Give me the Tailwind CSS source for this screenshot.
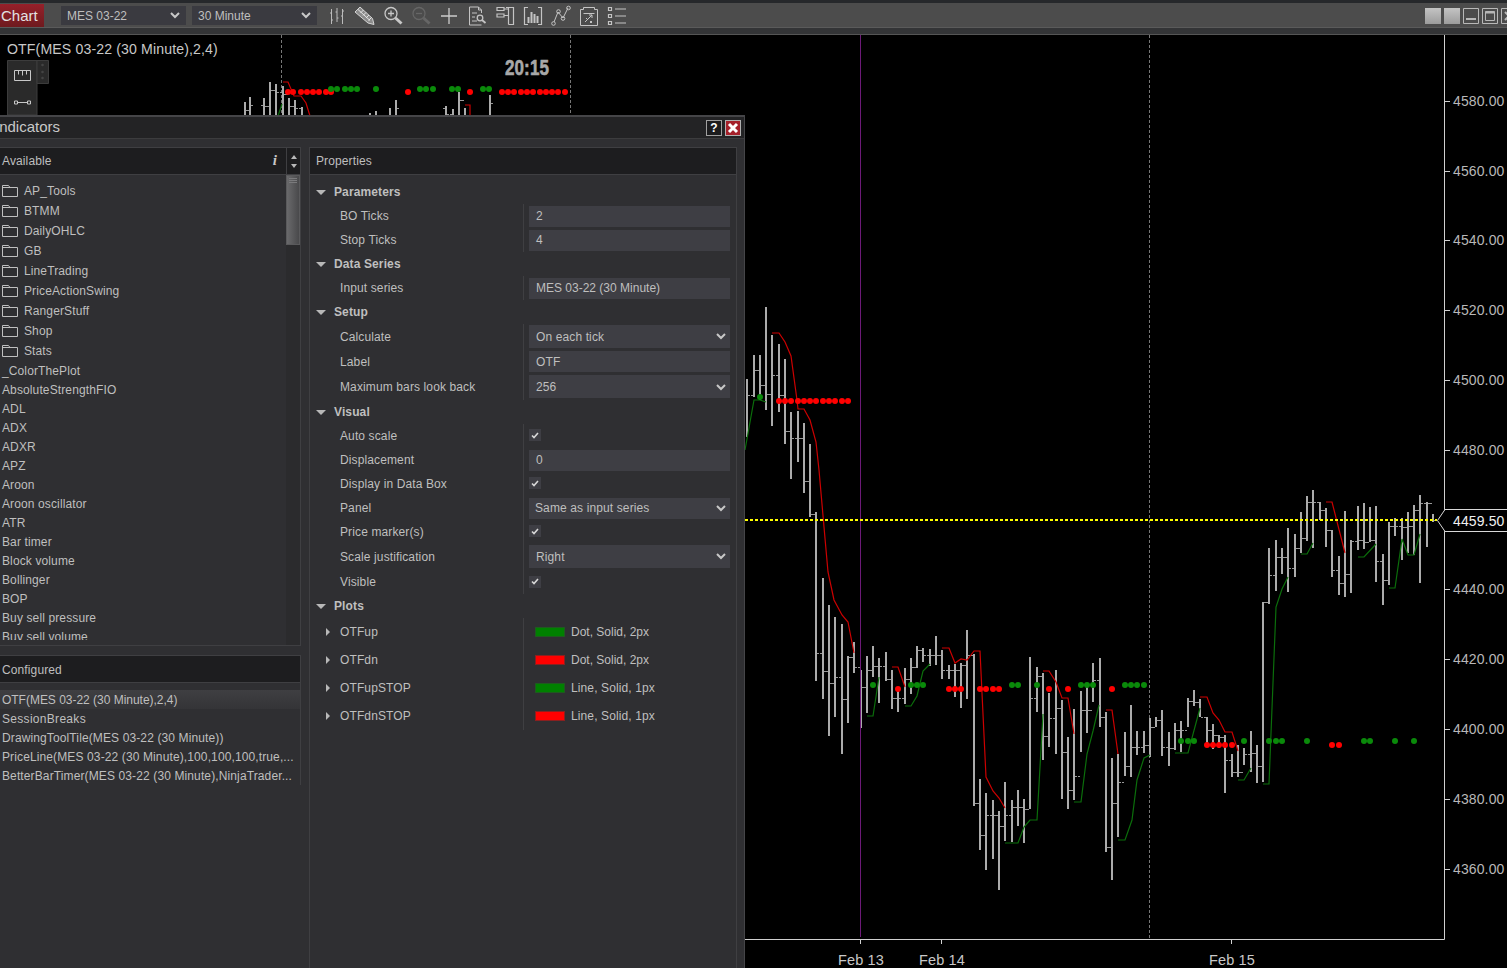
<!DOCTYPE html>
<html lang="en">
<head>
  <meta charset="UTF-8" />
  <title>Chart - Indicators</title>
  <script src="https://cdn.jsdelivr.net/npm/@tailwindcss/browser@4"></script>
</head>
<body class="bg-black font-['Liberation_Sans',Arial,sans-serif] text-xs tracking-[0.12px] text-[#bfbfbf]">
<svg class="hidden">
  <symbol id="folder" viewBox="0 0 16 12"><path d="M.5 11.5V.5h6l1.5 2h7.5v9zM.5 2.5h7.5" fill="none" stroke="#c0c0c0"/></symbol>
  <symbol id="chev" viewBox="0 0 10 7"><path d="M1 1l4 4 4-4" fill="none" stroke="#c8c8c8" stroke-width="2"/></symbol>
  <symbol id="tick" viewBox="0 0 8 7"><path d="M1 3.5l2 2 4-4.5" fill="none" stroke="#d8d8d8" stroke-width="1.6"/></symbol>
</svg>

<div class="relative w-[1507px] h-[968px] overflow-hidden">

  <!-- top toolbar -->
  <div class="h-[35px] bg-[#333436] border-b border-[#555]">
    <div class="h-[3px] bg-[#26282b]"></div>
    <div class="h-[25px] bg-[#4c4c4c] border-b border-[#5a5a5a] flex items-center">
      <div class="w-[44px] h-[23px] mt-[1px] flex items-center pl-[1px] bg-gradient-to-b from-[#96202a] to-[#6e1a1e] text-[15px] tracking-normal text-[#e2e2e2]">Chart</div>
      <div class="ml-[17px] mt-[1px] w-[125px] h-[19px] bg-[#3a3a40] flex items-center justify-between px-[6px] tracking-normal">MES 03-22 <svg class="w-[10px] h-[7px]"><use href="#chev"/></svg></div>
      <div class="ml-[6px] mt-[1px] w-[125px] h-[19px] bg-[#3a3a40] flex items-center justify-between px-[6px] tracking-normal">30 Minute <svg class="w-[10px] h-[7px]"><use href="#chev"/></svg></div>
      <div class="ml-2 mt-[1px] flex gap-1">
        <svg class="w-6 h-6" viewBox="0 0 24 24" fill="none" stroke="#bbb"><path d="M6.500 5v15M5 9h1.500M6.500 16H8M12 4v14M10.500 8H12M12 14h1.500M17.500 5v15M16 12h1.500M17.500 7H19"/></svg>
        <svg class="w-6 h-6" viewBox="0 0 24 24" fill="none" stroke="#d4d4d4"><path d="M7 3L2 8l13 11 6 1.500-1.500-6z" fill="#8c8c8c"/><path d="M5 5.500l12 11M7.500 9l3-3M10 11.500l3-3M13 14l3-3M15.500 16.500l3-3" stroke="#e4e4e4"/></svg>
        <svg class="w-6 h-6" viewBox="0 0 24 24" fill="none" stroke="#c8c8c8" stroke-width="1.300"><circle cx="10" cy="9.500" r="6"/><path d="M10 6.500v6M7 9.500h6"/><path d="M14.500 14l6 5.500" stroke-width="3"/></svg>
        <svg class="w-6 h-6" viewBox="0 0 24 24" fill="none" stroke="#666" stroke-width="1.300"><circle cx="10" cy="9.500" r="6"/><path d="M7 9.500h6"/><path d="M14.500 14l6 5.500" stroke-width="3"/></svg>
        <svg class="w-6 h-6" viewBox="0 0 24 24" fill="none" stroke="#ccc" stroke-width="1.300"><path d="M12 4v16M4 12h16"/></svg>
        <svg class="w-6 h-6" viewBox="0 0 24 24" fill="none" stroke="#c4c4c4"><path d="M16.500 9V6l-3-3h-9v18h12M13.500 3v3h3M7 9h5M7 13h3M7 17h5"/><circle cx="15" cy="14" r="2.800" stroke-width="1.300"/><path d="M17 16l3.500 3" stroke-width="1.800"/></svg>
        <svg class="w-6 h-6" viewBox="0 0 24 24" fill="none" stroke="#c4c4c4" stroke-width="1.200"><path d="M13 3.500h7.500v17h-5M15.500 3.500v17M4 3.500h7v3H4zM4 10h7v3H4zM11 5h4.500M11 11.500h4.500"/></svg>
        <svg class="w-6 h-6" viewBox="0 0 24 24" fill="none" stroke="#c4c4c4" stroke-width="1.200"><path d="M7 3.500H3.500v17H7M17 3.500h3.500v17H17"/><path d="M7.500 19v-6M10.500 19V8M13.500 19v-9M16.500 19v-7" stroke-width="2"/></svg>
        <svg class="w-6 h-6" viewBox="0 0 24 24" fill="none" stroke="#c4c4c4"><path d="M5 18l4-10 5 6 5-10"/><circle cx="4.500" cy="19.500" r="1.800"/><circle cx="9.500" cy="7.500" r="1.800"/><circle cx="14" cy="14.500" r="1.800"/><circle cx="19.500" cy="4" r="1.800"/></svg>
        <svg class="w-6 h-6" viewBox="0 0 24 24" fill="none" stroke="#c4c4c4"><path d="M3.500 5.500h3v-2h11v2h3v16h-17zM6.500 9.500h11M8 18l7-7M12 11h3v3M9 14l2 2M13 17l2 2M15 17l-2 2"/></svg>
        <svg class="w-6 h-6" viewBox="0 0 24 24" fill="none" stroke="#c4c4c4" stroke-width="1.200"><path d="M3.500 3.500h3v3h-3zM3.500 10.500h3v3h-3zM3.500 17.500h3v3h-3zM10 5h11M10 12h11M10 19h11"/></svg>
      </div>
      <div class="ml-auto mt-[1px] flex gap-[3px] -mr-[10px]">
        <div class="w-4 h-4 bg-gradient-to-b from-[#c4c4c4] to-[#9c9c9c]"></div>
        <div class="w-4 h-4 bg-gradient-to-b from-[#c4c4c4] to-[#9c9c9c]"></div>
        <svg class="w-4 h-4" viewBox="0 0 16 16" fill="none" stroke="#b8b8b8"><path d="M.5.500h15v15H.5z"/><path d="M3 11h10" stroke-width="2"/></svg>
        <svg class="w-4 h-4" viewBox="0 0 16 16" fill="none" stroke="#b8b8b8"><path d="M.5.500h15v15H.5zM3.500 3.500h9v9h-9z"/><path d="M3.500 4.500h9" stroke-width="2"/></svg>
        <svg class="w-4 h-4" viewBox="0 0 16 16" fill="none" stroke="#b8b8b8"><path d="M.5.500h15v15H.5z"/><path d="M4 4l8 8M12 4l-8 8" stroke-width="2"/></svg>
      </div>
    </div>
  </div>

  <!-- chart canvas -->
  <svg id="chart" class="absolute left-0 top-0" width="1507" height="968" viewBox="0 0 1507 968" font-family="Liberation Sans, Arial, sans-serif">
    <path d="M281.500 35V115M570.500 35V115M1149.500 35V938" stroke="#777" stroke-dasharray="3 2" fill="none"/>
    <g id="bars" shape-rendering="crispEdges"></g>
    <path d="M860.500 35V937" stroke="#6d1a78" fill="none"/>
    <g id="lines" fill="none"></g>
    <g id="dots"></g>
    <path d="M745 520H1437" stroke="#ffff00" stroke-width="2" stroke-dasharray="3 2" shape-rendering="crispEdges"/>
    <path d="M1444.500 35V939.500H745M860.500 939V944M941.500 939V944M1231.500 939V944" stroke="#d0d0d0" fill="none"/>
    <g id="axis" font-size="14" fill="#b8b8b8"></g>
    <g font-size="14.500" fill="#c8c8c8" text-anchor="middle">
      <text x="861" y="965">Feb 13</text>
      <text x="942" y="965">Feb 14</text>
      <text x="1232" y="965">Feb 15</text>
    </g>
    <path d="M1507 509.500H1445L1437.500 520.500 1445 531.500H1507" fill="#000" stroke="#d8d8d8"/>
    <text x="1453" y="526" font-size="14" fill="#f0f0f0">4459.50</text>
    <text x="7" y="54" font-size="14.130" fill="#c8c8c8">OTF(MES 03-22 (30 Minute),2,4)</text>
    <text x="505" y="74.500" font-size="22" font-weight="700" fill="#a8a8a8" stroke="#a8a8a8" stroke-width=".6" textLength="44" lengthAdjust="spacingAndGlyphs">20:15</text>
    <!-- drawing tools strip -->
    <path d="M7.500 60.500H37V115H7.500z" fill="#2a2a2a" stroke="#3c3c3c"/>
    <path d="M37 60.500H48.500V83.500H37z" fill="#2a2a2a" stroke="#3c3c3c"/>
    <circle cx="42.500" cy="65" r="1.300" fill="#444"/><circle cx="42.500" cy="72" r="1.300" fill="#444"/><circle cx="42.500" cy="78" r="1.300" fill="#444"/>
    <path d="M14.500 70.500h16v10h-16zM18.500 70.500v4M22.500 70.500v5M26.500 70.500v4" fill="none" stroke="#c8c8c8"/>
    <path d="M17 102.500h11" stroke="#c8c8c8"/><path d="M14.500 101h3v3h-3zM27.500 101h3v3h-3z" fill="none" stroke="#c8c8c8"/>
  </svg>

  <!-- indicators dialog -->
  <div class="absolute left-0 top-[115px] w-[745px] h-[853px] bg-[#2f2f32] border-r border-[#454548]">
    <div class="h-6 bg-[#232325] border-t-2 border-[#454548] border-b border-b-[#3c3c3e] flex items-center">
      <span class="-ml-[5px] pb-[2px] text-[15px] tracking-normal text-[#c8c8c8]">Indicators</span>
      <div class="ml-auto mr-[3px] flex gap-[3px]">
        <div class="w-4 h-4 bg-[#1c1c1e] border border-[#a0a0a0] flex items-center justify-center text-xs font-bold text-white">?</div>
        <div class="w-4 h-4 bg-[#a5202a] border border-[#b0b0b0] flex items-center justify-center">
          <svg class="w-3 h-3" viewBox="0 0 12 12"><path d="M2 2l8 8M10 2l-8 8" stroke="#fff" stroke-width="3"/></svg>
        </div>
      </div>
    </div>

    <div class="flex items-start pt-2">
      <!-- left column -->
      <div class="w-[301px] shrink-0">
        <div class="h-[499px] border-r border-b border-[#3f3f42] flex flex-col">
          <div class="h-7 shrink-0 flex bg-[#1d1d1f] border-t border-b border-[#3f3f42]">
            <div class="flex-1 flex items-center justify-between pl-[2px] pr-[9px]">Available <span class="font-['Liberation_Serif',serif] italic font-bold text-[15px] text-[#c8c8c8]">i</span></div>
            <div class="w-[14px] border-l border-[#3f3f42] flex flex-col items-center justify-center gap-[5px]">
              <div class="w-0 h-0 border-x-[3px] border-x-transparent border-b-[4px] border-b-[#b8b8b8]"></div>
              <div class="w-0 h-0 border-x-[3px] border-x-transparent border-t-[4px] border-t-[#b8b8b8]"></div>
            </div>
          </div>
          <div class="flex-1 flex min-h-0">
            <div class="flex-1 h-[465px] overflow-hidden pt-[6px] pl-[2px]">
              <div class="h-5 flex items-center gap-[6px]"><svg class="w-4 h-3"><use href="#folder"/></svg>AP_Tools</div>
              <div class="h-5 flex items-center gap-[6px]"><svg class="w-4 h-3"><use href="#folder"/></svg>BTMM</div>
              <div class="h-5 flex items-center gap-[6px]"><svg class="w-4 h-3"><use href="#folder"/></svg>DailyOHLC</div>
              <div class="h-5 flex items-center gap-[6px]"><svg class="w-4 h-3"><use href="#folder"/></svg>GB</div>
              <div class="h-5 flex items-center gap-[6px]"><svg class="w-4 h-3"><use href="#folder"/></svg>LineTrading</div>
              <div class="h-5 flex items-center gap-[6px]"><svg class="w-4 h-3"><use href="#folder"/></svg>PriceActionSwing</div>
              <div class="h-5 flex items-center gap-[6px]"><svg class="w-4 h-3"><use href="#folder"/></svg>RangerStuff</div>
              <div class="h-5 flex items-center gap-[6px]"><svg class="w-4 h-3"><use href="#folder"/></svg>Shop</div>
              <div class="h-5 flex items-center gap-[6px]"><svg class="w-4 h-3"><use href="#folder"/></svg>Stats</div>
              <div class="h-[19px] leading-[19px] mt-[1px]">_ColorThePlot</div>
              <div class="h-[19px] leading-[19px]">AbsoluteStrengthFIO</div>
              <div class="h-[19px] leading-[19px]">ADL</div>
              <div class="h-[19px] leading-[19px]">ADX</div>
              <div class="h-[19px] leading-[19px]">ADXR</div>
              <div class="h-[19px] leading-[19px]">APZ</div>
              <div class="h-[19px] leading-[19px]">Aroon</div>
              <div class="h-[19px] leading-[19px]">Aroon oscillator</div>
              <div class="h-[19px] leading-[19px]">ATR</div>
              <div class="h-[19px] leading-[19px]">Bar timer</div>
              <div class="h-[19px] leading-[19px]">Block volume</div>
              <div class="h-[19px] leading-[19px]">Bollinger</div>
              <div class="h-[19px] leading-[19px]">BOP</div>
              <div class="h-[19px] leading-[19px]">Buy sell pressure</div>
              <div class="h-[19px] leading-[19px]">Buy sell volume</div>
            </div>
            <div class="w-[14px] bg-[#2b2b2d]">
              <div class="h-[70px] bg-gradient-to-r from-[#6a6a6c] to-[#49494b] border border-[#5a5a5c] pt-[2px] px-[2px] flex flex-col gap-[1px]">
                <div class="h-px bg-[#7a7a7c]"></div>
                <div class="h-px bg-[#7a7a7c]"></div>
                <div class="h-px bg-[#7a7a7c]"></div>
              </div>
            </div>
          </div>
        </div>

        <div class="mt-[9px] border-r border-[#3f3f42]">
          <div class="h-7 flex items-center pl-[2px] pt-[2px] bg-[#1d1d1f] border-t border-b border-[#3f3f42]">Configured</div>
          <div class="pt-[7px]">
            <div class="h-[19px] leading-[21px] pl-[2px] tracking-[-0.02px] bg-gradient-to-b from-[#3f3f42] to-[#343437]">OTF(MES 03-22 (30 Minute),2,4)</div>
            <div class="h-[19px] leading-[21px] pl-[2px] tracking-[0.3px]">SessionBreaks</div>
            <div class="h-[19px] leading-[21px] pl-[2px]">DrawingToolTile(MES 03-22 (30 Minute))</div>
            <div class="h-[19px] leading-[21px] pl-[2px]">PriceLine(MES 03-22 (30 Minute),100,100,100,true,...</div>
            <div class="h-[19px] leading-[21px] pl-[2px]">BetterBarTimer(MES 03-22 (30 Minute),NinjaTrader...</div>
          </div>
        </div>
      </div>

      <!-- properties -->
      <div class="ml-2 w-[428px] h-[821px] border-x border-[#3f3f42]">
        <div class="h-7 flex items-center pl-[6px] bg-[#1d1d1f] border-t border-b border-[#3f3f42]">Properties</div>
        <div class="pt-[5px]">
          <div class="h-6 flex items-center pl-[6px] font-bold"><div class="w-0 h-0 border-x-[5px] border-x-transparent border-t-[5px] border-t-[#b8b8b8] mr-2"></div>Parameters</div>
          <div class="h-6 flex"><div class="w-[213px] pl-[30px] leading-6">BO Ticks</div><div class="flex-1 border-l border-[#3f3f42] pl-[5px] flex items-center"><div class="w-[201px] h-[21px] bg-[#3e3e44] pl-[7px] leading-[21px]">2</div></div></div>
          <div class="h-6 flex"><div class="w-[213px] pl-[30px] leading-6">Stop Ticks</div><div class="flex-1 border-l border-[#3f3f42] pl-[5px] flex items-center"><div class="w-[201px] h-[21px] bg-[#3e3e44] pl-[7px] leading-[21px]">4</div></div></div>

          <div class="h-6 flex items-center pl-[6px] font-bold"><div class="w-0 h-0 border-x-[5px] border-x-transparent border-t-[5px] border-t-[#b8b8b8] mr-2"></div>Data Series</div>
          <div class="h-6 flex"><div class="w-[213px] pl-[30px] leading-6">Input series</div><div class="flex-1 border-l border-[#3f3f42] pl-[5px] flex items-center"><div class="w-[201px] h-[21px] bg-[#3e3e44] pl-[7px] leading-[21px] tracking-normal">MES 03-22 (30 Minute)</div></div></div>

          <div class="h-6 flex items-center pl-[6px] font-bold"><div class="w-0 h-0 border-x-[5px] border-x-transparent border-t-[5px] border-t-[#b8b8b8] mr-2"></div>Setup</div>
          <div class="h-[25px] flex"><div class="w-[213px] pl-[30px] leading-[27px]">Calculate</div><div class="flex-1 border-l border-[#3f3f42] pl-[5px] flex items-center"><div class="w-[201px] h-[23px] bg-[#3e3e44] pl-[7px] pr-[4px] flex items-center justify-between">On each tick <svg class="w-[10px] h-[7px]"><use href="#chev"/></svg></div></div></div>
          <div class="h-[25px] flex"><div class="w-[213px] pl-[30px] leading-[27px]">Label</div><div class="flex-1 border-l border-[#3f3f42] pl-[5px] flex items-center"><div class="w-[201px] h-[21px] bg-[#3e3e44] pl-[7px] leading-[23px]">OTF</div></div></div>
          <div class="h-[26px] flex"><div class="w-[213px] pl-[30px] leading-[26px]">Maximum bars look back</div><div class="flex-1 border-l border-[#3f3f42] pl-[5px] pb-[1px] flex items-center"><div class="w-[201px] h-[23px] bg-[#3e3e44] pl-[7px] pr-[4px] pt-[1px] flex items-center justify-between">256 <svg class="w-[10px] h-[7px]"><use href="#chev"/></svg></div></div></div>

          <div class="h-6 flex items-center pl-[6px] font-bold"><div class="w-0 h-0 border-x-[5px] border-x-transparent border-t-[5px] border-t-[#b8b8b8] mr-2"></div>Visual</div>
          <div class="h-6 flex"><div class="w-[213px] pl-[30px] leading-6">Auto scale</div><div class="flex-1 border-l border-[#3f3f42] pl-[5px] pb-[2px] flex items-center"><div class="w-3 h-3 bg-[#3e3e44] flex items-center justify-center"><svg class="w-2 h-[7px]"><use href="#tick"/></svg></div></div></div>
          <div class="h-6 flex"><div class="w-[213px] pl-[30px] leading-6">Displacement</div><div class="flex-1 border-l border-[#3f3f42] pl-[5px] flex items-center"><div class="w-[201px] h-[21px] bg-[#3e3e44] pl-[7px] leading-[21px]">0</div></div></div>
          <div class="h-6 flex"><div class="w-[213px] pl-[30px] leading-6">Display in Data Box</div><div class="flex-1 border-l border-[#3f3f42] pl-[5px] pb-[2px] flex items-center"><div class="w-3 h-3 bg-[#3e3e44] flex items-center justify-center"><svg class="w-2 h-[7px]"><use href="#tick"/></svg></div></div></div>
          <div class="h-6 flex"><div class="w-[213px] pl-[30px] leading-6">Panel</div><div class="flex-1 border-l border-[#3f3f42] pl-[5px] flex items-center"><div class="w-[201px] h-[21px] bg-[#3e3e44] pl-[6px] pr-[4px] flex items-center justify-between">Same as input series <svg class="w-[10px] h-[7px]"><use href="#chev"/></svg></div></div></div>
          <div class="h-6 flex"><div class="w-[213px] pl-[30px] leading-6">Price marker(s)</div><div class="flex-1 border-l border-[#3f3f42] pl-[5px] pb-[2px] flex items-center"><div class="w-3 h-3 bg-[#3e3e44] flex items-center justify-center"><svg class="w-2 h-[7px]"><use href="#tick"/></svg></div></div></div>
          <div class="h-[25px] flex"><div class="w-[213px] pl-[30px] leading-[27px]">Scale justification</div><div class="flex-1 border-l border-[#3f3f42] pl-[5px] flex items-center"><div class="w-[201px] h-[23px] bg-[#3e3e44] pl-[7px] pr-[4px] flex items-center justify-between">Right <svg class="w-[10px] h-[7px]"><use href="#chev"/></svg></div></div></div>
          <div class="h-[25px] flex"><div class="w-[213px] pl-[30px] leading-[27px]">Visible</div><div class="flex-1 border-l border-[#3f3f42] pl-[5px] flex items-center"><div class="w-3 h-3 bg-[#3e3e44] flex items-center justify-center"><svg class="w-2 h-[7px]"><use href="#tick"/></svg></div></div></div>

          <div class="h-6 flex items-center pl-[6px] font-bold"><div class="w-0 h-0 border-x-[5px] border-x-transparent border-t-[5px] border-t-[#b8b8b8] mr-2"></div>Plots</div>
          <div class="h-7 flex"><div class="w-[213px] pl-[16px] flex items-center"><div class="w-0 h-0 border-y-[4px] border-y-transparent border-l-[4px] border-l-[#b8b8b8] mr-[10px]"></div>OTFup</div><div class="flex-1 border-l border-[#3f3f42] pl-[11px] flex items-center gap-[6px] tracking-normal"><div class="w-[30px] h-[10px] bg-[#008000] border border-[#1f5a1f]"></div>Dot, Solid, 2px</div></div>
          <div class="h-7 flex"><div class="w-[213px] pl-[16px] flex items-center"><div class="w-0 h-0 border-y-[4px] border-y-transparent border-l-[4px] border-l-[#b8b8b8] mr-[10px]"></div>OTFdn</div><div class="flex-1 border-l border-[#3f3f42] pl-[11px] flex items-center gap-[6px] tracking-normal"><div class="w-[30px] h-[10px] bg-[#ff0000] border border-[#8a2020]"></div>Dot, Solid, 2px</div></div>
          <div class="h-7 flex"><div class="w-[213px] pl-[16px] flex items-center"><div class="w-0 h-0 border-y-[4px] border-y-transparent border-l-[4px] border-l-[#b8b8b8] mr-[10px]"></div>OTFupSTOP</div><div class="flex-1 border-l border-[#3f3f42] pl-[11px] flex items-center gap-[6px]"><div class="w-[30px] h-[10px] bg-[#008000] border border-[#1f5a1f]"></div>Line, Solid, 1px</div></div>
          <div class="h-7 flex"><div class="w-[213px] pl-[16px] flex items-center"><div class="w-0 h-0 border-y-[4px] border-y-transparent border-l-[4px] border-l-[#b8b8b8] mr-[10px]"></div>OTFdnSTOP</div><div class="flex-1 border-l border-[#3f3f42] pl-[11px] flex items-center gap-[6px]"><div class="w-[30px] h-[10px] bg-[#ff0000] border border-[#8a2020]"></div>Line, Solid, 1px</div></div>
        </div>
      </div>
    </div>
  </div>
</div>

<script>
  // bars are [x, high, low, close]; x read off the reference in 3x crop units
  const barsA = [[5,379,437,395],[27,355,397,370],[45,355,400,385],[63,307,410,394],[81,335,426,375],[102,344,412,395],[120,359,444,431],[138,412,479,438],[159,411,462,438],[177,423,493,481],[195,444,517,514],[213,512,681,653],[234,578,699,671],[252,605,736,683],[270,617,717,677],[291,624,754,699],[309,656,723,657],[327,642,673,667],[347,670,728,687],[366,656,713,670],[384,646,677,666],[402,658,703,666],[423,652,681,679],[441,670,709,698],[459,690,712,698],[479,668,704,679],[498,658,694,667],[516,646,668,650],[534,648,662,655],[554,649,666,655],[573,636,665,655],[591,650,679,670],[611,665,679,670],[630,664,697,670],[648,663,708,665],[666,630,699,655],[687,654,806,803],[705,779,850,835],[723,793,870,815],[744,800,859,815],[762,811,890,826],[780,782,841,815],[801,800,842,807],[819,790,826,807],[837,799,843,809],[855,657,809,698],[876,667,712,676],[894,673,760,736],[912,693,747,718],[933,670,754,708],[951,700,799,752],[969,737,809,790],[987,709,800,776],[1007,691,752,710],[1026,686,733,710],[1044,663,702,680],[1065,658,727,717],[1083,712,852,847],[1101,758,880,803],[1119,754,837,782]];
  const barsB = [[0,732,776,766],[18,705,777,747],[36,731,755,747],[57,731,753,745],[75,718,757,727],[93,717,727,720],[111,710,756,747],[132,732,766,748],[150,723,750,730],[168,721,752,730],[189,698,727,701],[207,690,706,702],[225,699,717,717],[246,717,743,730],[264,724,749,735],[282,735,748,737],[300,735,793,760],[321,754,777,772],[339,745,777,772],[357,748,765,754],[378,731,772,753],[396,745,783,766],[414,602,782,602],[432,548,604,575],[453,540,591,557],[471,548,574,557],[489,528,592,568],[510,534,577,548],[528,512,553,538],[546,496,541,502],[564,490,548,502],[585,502,520,510],[603,508,547,530],[621,530,577,570],[642,556,595,583],[660,511,597,574],[678,540,593,541],[699,506,550,540],[717,503,549,542],[735,507,542,540],[753,506,582,561],[774,554,605,580],[792,522,585,526],[810,518,536,526],[831,518,560,527],[849,512,553,526],[867,505,555,510],[885,495,583,503],[906,502,547,503],[924,514,522,520]];
  const strip = [[244,102],[249,97],[263,98],[269,82],[275,84],[282,86],[288,98],[294,100],[301,107],[369,113],[375,111],[389,108],[395,100],[445,106],[452,109],[458,92],[464,108],[489,95]];

  const redLines = [
    [[772,333],[779,333],[785,342],[791,356],[797,400],[798,409],[804,409],[810,420],[816,442],[819,470],[824,527],[828,572],[834,600],[842,615],[848,622],[854,653]],
    [[892,667],[898,667],[905,687]],
    [[942,648],[949,648],[955,663],[961,659],[967,660],[974,651],[980,651],[986,777],[993,791],[999,798],[1005,808]],
    [[1043,671],[1049,671],[1056,682],[1062,698],[1068,698],[1074,734]],
    [[1106,710],[1112,710],[1118,754]],
    [[1200,697],[1207,697],[1213,713],[1219,720],[1225,732],[1232,732],[1238,751]],
    [[1326,502],[1332,502],[1345,553]],
    [[283,82],[288,82],[294,96],[301,96],[306,103],[310,116]],
    [[465,105],[470,105],[470,116]]
  ];
  const greenLines = [
    [[745,450],[754,400],[760,400],[766,402]],
    [[867,716],[873,716],[879,677]],
    [[905,706],[911,706],[917,696],[923,671],[930,664]],
    [[1005,843],[1018,843],[1024,827],[1030,820],[1037,820],[1043,714]],
    [[1074,802],[1081,802],[1087,754],[1093,731],[1099,705]],
    [[1118,840],[1125,840],[1132,820],[1137,780],[1144,758],[1150,755]],
    [[1175,753],[1188,753],[1200,708]],
    [[1238,780],[1244,780],[1251,768]],
    [[1263,784],[1269,784],[1276,607],[1282,589],[1288,577]],
    [[1301,554],[1307,554],[1313,543]],
    [[1358,557],[1364,557],[1376,544]],
    [[1389,588],[1395,588],[1402,539],[1408,555],[1414,555],[1420,534]],
    [[278,116],[282,104]]
  ];

  const fromA = z => Math.round(745 + z / 3);
  const fromB = z => Math.round(1125 + z / 3);

  let barPath = '';
  let tickPath = '';
  let prev = null;
  function addBar(x, hi, lo, close) {
    barPath += `M${x} ${hi}h2V${lo}h-2Z`;
    if (prev !== null) tickPath += `M${x - 2} ${prev}h2v1h-2Z`;
    tickPath += `M${x + 2} ${close}h2v1h-2Z`;
    prev = close;
  }
  barsA.forEach(b => addBar(fromA(b[0]) - 1, b[1], b[2], b[3]));
  barsB.forEach(b => addBar(fromB(b[0]) - 1, b[1], b[2], b[3]));
  prev = null;
  strip.forEach(b => addBar(b[0], b[1], 118, b[1] + 8));
  document.getElementById('bars').innerHTML =
    `<path d="${barPath}" fill="#ababab"/><path d="${tickPath}" fill="#989898"/>`;

  const pts = l => l.map(p => p.join(',')).join(' ');
  document.getElementById('lines').innerHTML =
    redLines.map(l => `<polyline points="${pts(l)}" stroke="#cc0000" stroke-width="1.2"/>`).join('') +
    greenLines.map(l => `<polyline points="${pts(l)}" stroke="#0b6e0b" stroke-width="1.2"/>`).join('');

  const dot = (x, y, c) => `<circle cx="${x}" cy="${y}" r="3" fill="${c}"/>`;
  let dots = dot(760, 397, '#0a8a0a');
  [102,120,138,159,177,195,213,234,252,270,291,309].forEach(z => dots += dot(fromA(z), 401, '#ff0000'));
  [384,498,516,534,800,819,876,1007,1026,1044,1139].forEach(z => dots += dot(fromA(z), 685, '#0a8a0a'));
  [18,36,57].forEach(z => dots += dot(fromB(z), 685, '#0a8a0a'));
  [459,612,630,648,705,723,744,762,912,968,1101].forEach(z => dots += dot(fromA(z), 689, '#ff0000'));
  [168,189,207,357,432,453,471,546,717,735,810,867].forEach(z => dots += dot(fromB(z), 741, '#0a8a0a'));
  [246,264,282,300,321,621,642].forEach(z => dots += dot(fromB(z), 745, '#ff0000'));
  [288,293,301,307,313,319,326,331,408,470,502,508,514,521,527,533,540,546,552,558,565].forEach(x => dots += dot(x, 92, '#ff0000'));
  [331,337,345,351,357,376,420,426,433,452,458,483,489].forEach(x => dots += dot(x, 89, '#0a8a0a'));
  document.getElementById('dots').innerHTML = dots;

  const levels = [['4580.00',101],['4560.00',171],['4540.00',240],['4520.00',310],['4500.00',380],['4480.00',450],['4440.00',589],['4420.00',659],['4400.00',729],['4380.00',799],['4360.00',869]];
  document.getElementById('axis').innerHTML = levels.map(([t, y]) =>
    `<path d="M1445 ${y + 0.5}h5" stroke="#d0d0d0"/><text x="1453" y="${y + 5}">${t}</text>`).join('');
</script>
</body>
</html>
